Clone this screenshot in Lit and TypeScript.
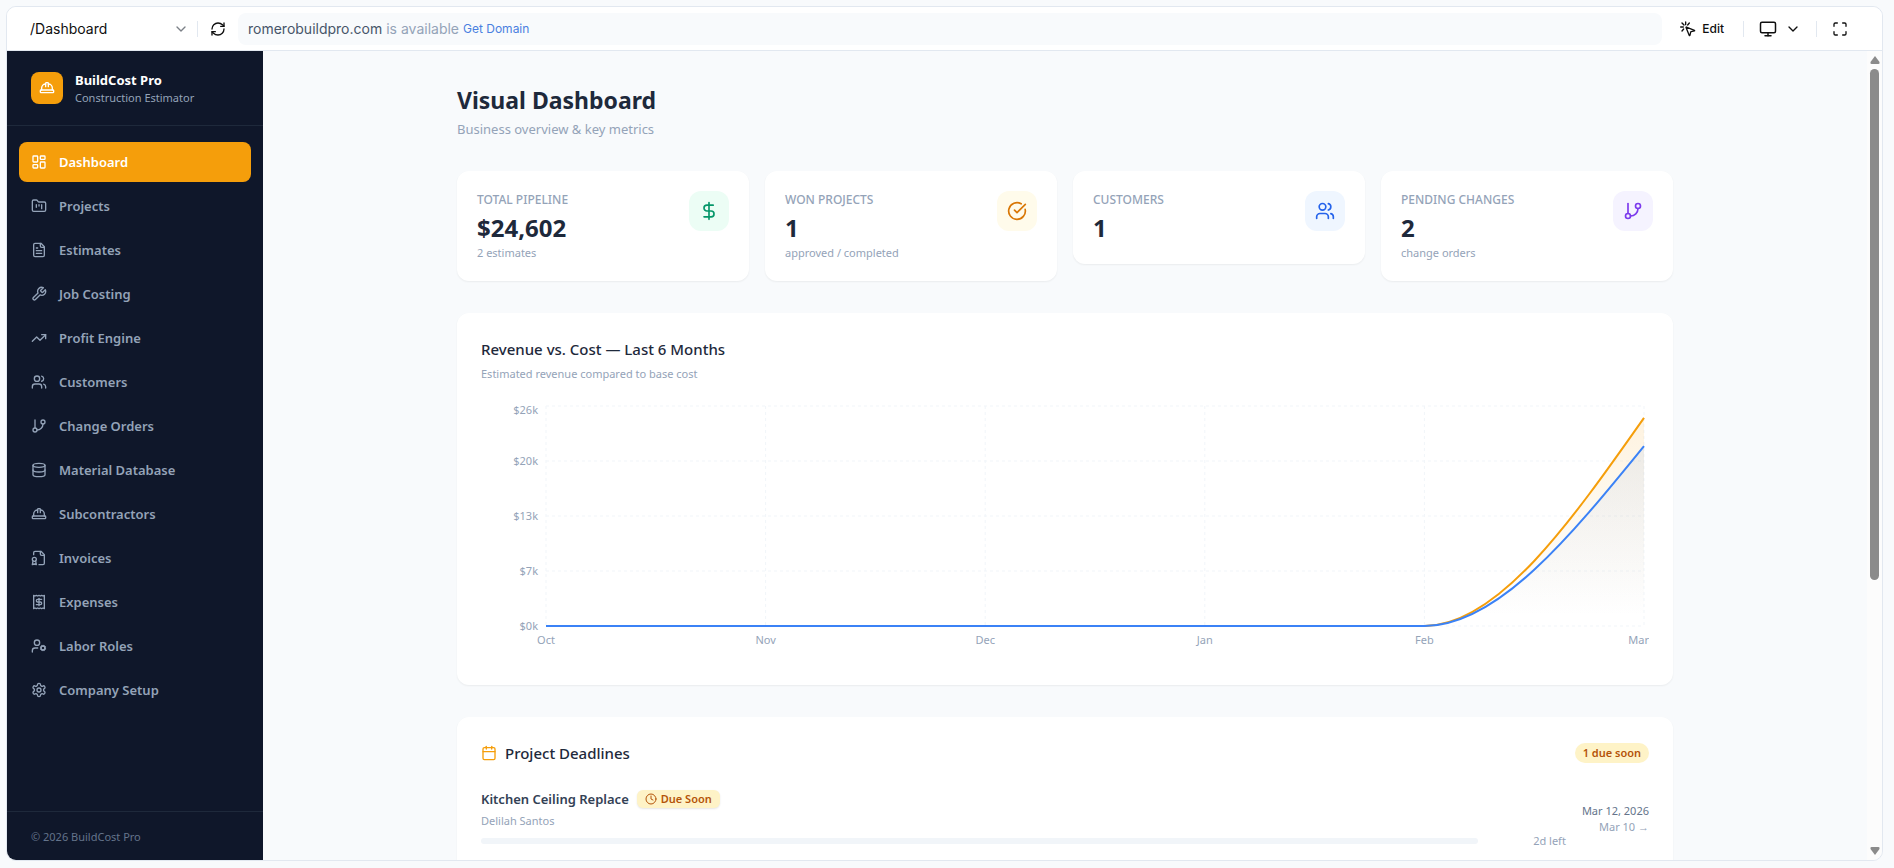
import { LitElement, html, css, svg } from 'lit';
import { customElement, property, state } from 'lit/decorators.js';
import { classMap } from 'lit/directives/class-map.js';

const ICONS: Record<string, any> = {
	dashboard: svg`<rect x="3" y="3" width="7" height="9" rx="1"/><rect x="14" y="3" width="7" height="5" rx="1"/><rect x="14" y="12" width="7" height="9" rx="1"/><rect x="3" y="16" width="7" height="5" rx="1"/>`,
	folder: svg`<path d="M4 20h16a2 2 0 0 0 2-2V8a2 2 0 0 0-2-2h-7.93a2 2 0 0 1-1.66-.9l-.82-1.2A2 2 0 0 0 7.93 3H4a2 2 0 0 0-2 2v13c0 1.1.9 2 2 2Z"/><path d="M8 10v4"/><path d="M12 10v2"/><path d="M16 10v6"/>`,
	file: svg`<path d="M15 2H6a2 2 0 0 0-2 2v16a2 2 0 0 0 2 2h12a2 2 0 0 0 2-2V7Z"/><path d="M14 2v4a2 2 0 0 0 2 2h4"/><path d="M10 9H8"/><path d="M16 13H8"/><path d="M16 17H8"/>`,
	wrench: svg`<path d="M14.7 6.3a1 1 0 0 0 0 1.4l1.6 1.6a1 1 0 0 0 1.4 0l3.77-3.77a6 6 0 0 1-7.94 7.94l-6.91 6.91a2.12 2.12 0 0 1-3-3l6.91-6.91a6 6 0 0 1 7.94-7.94l-3.76 3.76z"/>`,
	trending: svg`<path d="M22 7 13.5 15.5 8.5 10.5 2 17"/><path d="M16 7h6v6"/>`,
	users: svg`<path d="M16 21v-2a4 4 0 0 0-4-4H6a4 4 0 0 0-4 4v2"/><circle cx="9" cy="7" r="4"/><path d="M22 21v-2a4 4 0 0 0-3-3.87"/><path d="M16 3.13a4 4 0 0 1 0 7.75"/>`,
	branch: svg`<path d="M6 3v12"/><circle cx="18" cy="6" r="3"/><circle cx="6" cy="18" r="3"/><path d="M18 9a9 9 0 0 1-9 9"/>`,
	database: svg`<ellipse cx="12" cy="5" rx="9" ry="3"/><path d="M3 5V19A9 3 0 0 0 21 19V5"/><path d="M3 12A9 3 0 0 0 21 12"/>`,
	hardhat: svg`<path d="M10 10V5a1 1 0 0 1 1-1h2a1 1 0 0 1 1 1v5"/><path d="M14 6a6 6 0 0 1 6 6v3"/><path d="M4 15v-3a6 6 0 0 1 6-6"/><rect x="2" y="15" width="20" height="4" rx="1"/>`,
	badge: svg`<path d="M12 22h6a2 2 0 0 0 2-2V7l-5-5H6a2 2 0 0 0-2 2v3"/><path d="M14 2v4a2 2 0 0 0 2 2h4"/><circle cx="5" cy="14" r="3"/><path d="M7 16.5 8 22l-3-1-3 1 1-5.5"/>`,
	receipt: svg`<path d="M4 2v20l2-1 2 1 2-1 2 1 2-1 2 1 2-1 2 1V2l-2 1-2-1-2 1-2-1-2 1-2-1-2 1Z"/><path d="M16 8h-6a2 2 0 1 0 0 4h4a2 2 0 1 1 0 4H8"/><path d="M12 17.5v-11"/>`,
	usercog: svg`<circle cx="18" cy="15" r="3"/><circle cx="9" cy="7" r="4"/><path d="M10 15H6a4 4 0 0 0-4 4v2"/><path d="m21.7 16.4-.9-.3"/><path d="m15.2 13.9-.9-.3"/><path d="m16.6 18.7.3-.9"/><path d="m19.1 12.2.3-.9"/><path d="m19.6 18.7-.4-1"/><path d="m16.8 12.3-.4-1"/><path d="m14.3 16.6 1-.4"/><path d="m20.7 13.8 1-.4"/>`,
	settings: svg`<path d="M12.22 2h-.44a2 2 0 0 0-2 2v.18a2 2 0 0 1-1 1.73l-.43.25a2 2 0 0 1-2 0l-.15-.08a2 2 0 0 0-2.73.73l-.22.38a2 2 0 0 0 .73 2.73l.15.1a2 2 0 0 1 1 1.72v.51a2 2 0 0 1-1 1.74l-.15.09a2 2 0 0 0-.73 2.73l.22.38a2 2 0 0 0 2.73.73l.15-.08a2 2 0 0 1 2 0l.43.25a2 2 0 0 1 1 1.73V20a2 2 0 0 0 2 2h.44a2 2 0 0 0 2-2v-.18a2 2 0 0 1 1-1.73l.43-.25a2 2 0 0 1 2 0l.15.08a2 2 0 0 0 2.73-.73l.22-.39a2 2 0 0 0-.73-2.73l-.15-.08a2 2 0 0 1-1-1.74v-.5a2 2 0 0 1 1-1.74l.15-.09a2 2 0 0 0 .73-2.73l-.22-.38a2 2 0 0 0-2.73-.73l-.15.08a2 2 0 0 1-2 0l-.43-.25a2 2 0 0 1-1-1.73V4a2 2 0 0 0-2-2z"/><circle cx="12" cy="12" r="3"/>`,
	dollar: svg`<path d="M12 2v20"/><path d="M17 5H9.5a3.5 3.5 0 0 0 0 7h5a3.5 3.5 0 0 1 0 7H6"/>`,
	check: svg`<path d="M21.801 10A10 10 0 1 1 17 3.335"/><path d="m9 11 3 3L22 4"/>`,
	calendar: svg`<path d="M8 2v4"/><path d="M16 2v4"/><rect x="3" y="4" width="18" height="18" rx="2"/><path d="M3 10h18"/>`,
	clock: svg`<circle cx="12" cy="12" r="10"/><path d="M12 6v6l4 2"/>`,
	refresh: svg`<path d="M3 12a9 9 0 0 1 9-9 9.75 9.75 0 0 1 6.74 2.74L21 8"/><path d="M21 3v5h-5"/><path d="M21 12a9 9 0 0 1-9 9 9.75 9.75 0 0 1-6.74-2.74L3 16"/><path d="M8 16H3v5"/>`,
	chevron: svg`<path d="m6 9 6 6 6-6"/>`,
	monitor: svg`<rect x="2" y="3" width="20" height="14" rx="2"/><path d="M8 21h8"/><path d="M12 17v4"/>`,
	expand: svg`<path d="M8 3H5a2 2 0 0 0-2 2v3"/><path d="M21 8V5a2 2 0 0 0-2-2h-3"/><path d="M3 16v3a2 2 0 0 0 2 2h3"/><path d="M16 21h3a2 2 0 0 0 2-2v-3"/>`,
	click: svg`<path d="M9.04 9.69a.5.5 0 0 1 .65-.65l12 4.9a.5.5 0 0 1-.07.95l-4.85 1.14a1 1 0 0 0-.74.74l-1.14 4.85a.5.5 0 0 1-.95.07z"/><path d="M8.5 1.5v4"/><path d="m14 3-2.5 3"/><path d="m3 3 3 3"/><path d="M1 9h4"/><path d="m5.5 12-2.5 3"/>`,
};

function icon(name: string, size = 16) {
	return html`<svg width=${size} height=${size} viewBox="0 0 24 24" fill="none" stroke="currentColor" stroke-width="2" stroke-linecap="round" stroke-linejoin="round" aria-hidden="true">${ICONS[name]}</svg>`;
}

@customElement('revenue-chart')
export class RevenueChart extends LitElement {

	@property({ type: Array })
	months = ['Oct', 'Nov', 'Dec', 'Jan', 'Feb', 'Mar'];

	@property({ type: Array })
	revenue = [0, 0, 0, 0, 0, 24602];

	@property({ type: Array })
	cost = [0, 0, 0, 0, 0, 21270];

	@state()
	width = 1168;

	private max = 26000;
	private left = 65;
	private top = 5;
	private plotHeight = 220;
	private observer?: ResizeObserver;

	static get styles() {
		return css`
			:host {
				display: block;
				height: 260px;
				overflow: hidden;
			}

			svg {
				display: block;
			}

			text {
				font-family: "Noto Sans", sans-serif;
				font-size: 11px;
				fill: #94a3b8;
			}

			.grid line {
				stroke: #f1f5f9;
				stroke-dasharray: 3 3;
			}

			.line {
				fill: none;
				stroke-width: 2;
			}

			.revenue {
				stroke: #f59e0b;
			}

			.cost {
				stroke: #3b82f6;
			}
		`;
	}

	firstUpdated() {
		this.observer = new ResizeObserver(() => {
			this.width = this.clientWidth;
		});
		this.observer.observe(this);
	}

	disconnectedCallback() {
		super.disconnectedCallback();
		this.observer?.disconnect();
	}

	x(i: number) {
		return this.left + (this.width - this.left - 5) * i / (this.months.length - 1);
	}

	y(value: number) {
		return this.top + this.plotHeight * (1 - value / this.max);
	}

	// flat up to the last month, then eases upward
	curve(values: number[]) {
		let d = `M${this.x(0)},${this.y(values[0])}`;
		for (let i = 1; i < values.length; i++) {
			const x0 = this.x(i - 1), x1 = this.x(i);
			const y0 = this.y(values[i - 1]), y1 = this.y(values[i]);
			const third = (x1 - x0) / 3;
			d += `C${x0 + third},${y0} ${x1 - third},${y1 + (y0 - y1) / 2} ${x1},${y1}`;
		}
		return d;
	}

	area(values: number[]) {
		return `${this.curve(values)}V${this.y(0)}H${this.x(0)}Z`;
	}

	render() {
		const ticks = [0, 6500, 13000, 19500, 26000];
		const last = this.months.length - 1;
		const right = this.x(last);
		return html`
			<svg width=${this.width} height="260" role="img" aria-label="Revenue and cost by month">
				<defs>
					<linearGradient id="fill-revenue" x1="0" y1="0" x2="0" y2="1">
						<stop offset="5%" stop-color="#f59e0b" stop-opacity=".12"/>
						<stop offset="95%" stop-color="#f59e0b" stop-opacity="0"/>
					</linearGradient>
					<linearGradient id="fill-cost" x1="0" y1="0" x2="0" y2="1">
						<stop offset="5%" stop-color="#3b82f6" stop-opacity=".08"/>
						<stop offset="95%" stop-color="#3b82f6" stop-opacity="0"/>
					</linearGradient>
				</defs>
				<g class="grid">
					${ticks.map(t => svg`<line x1=${this.left} x2=${right} y1=${this.y(t)} y2=${this.y(t)}/>`)}
					${this.months.map((_, i) => svg`<line x1=${this.x(i)} x2=${this.x(i)} y1=${this.top} y2=${this.y(0)}/>`)}
				</g>
				<path d=${this.area(this.revenue)} fill="url(#fill-revenue)"/>
				<path class="line revenue" d=${this.curve(this.revenue)}/>
				<path d=${this.area(this.cost)} fill="url(#fill-cost)"/>
				<path class="line cost" d=${this.curve(this.cost)}/>
				${ticks.map(t => svg`<text x=${this.left - 8} y=${Math.max(this.y(t), 9) + 4} text-anchor="end">$${Math.round(t / 1000)}k</text>`)}
				${this.months.map((m, i) => svg`<text x=${i === last ? this.width : this.x(i)} y="243" text-anchor=${i === last ? 'end' : 'middle'}>${m}</text>`)}
			</svg>
		`;
	}
}

@customElement('stat-card')
export class StatCard extends LitElement {

	@property()
	label = '';

	@property()
	value = '';

	@property()
	note = '';

	@property()
	icon = '';

	@property()
	tone = '';

	static get styles() {
		return css`
			.card {
				display: flex;
				justify-content: space-between;
				align-items: flex-start;
				padding: 20px;
				background: white;
				border-radius: 12px;
				box-shadow: 0 1px 2px rgba(0, 0, 0, .06);
			}

			.label {
				font-size: 12px;
				line-height: 18px;
				font-weight: 500;
				text-transform: uppercase;
				color: #94a3b8;
			}

			.value {
				margin-top: 3px;
				font-size: 24px;
				line-height: 32px;
				font-weight: 700;
				color: #1e293b;
			}

			.note {
				font-size: 11px;
				line-height: 17px;
				color: #94a3b8;
			}

			.icon {
				display: grid;
				place-items: center;
				width: 40px;
				height: 40px;
				border-radius: 12px;
			}

			.green {
				background: #ecfdf5;
				color: #059669;
			}

			.amber {
				background: #fffbeb;
				color: #d97706;
			}

			.blue {
				background: #eff6ff;
				color: #2563eb;
			}

			.purple {
				background: #f5f3ff;
				color: #7c3aed;
			}
		`;
	}

	render() {
		return html`
			<div class="card">
				<div>
					<div class="label">${this.label}</div>
					<div class="value">${this.value}</div>
					${this.note ? html`<div class="note">${this.note}</div>` : ''}
				</div>
				<div class="icon ${this.tone}">${icon(this.icon, 20)}</div>
			</div>
		`;
	}
}

@customElement('app-root')
export default class AppRoot extends LitElement {

	@state()
	page = 'Dashboard';

	nav = [
		['dashboard', 'Dashboard'],
		['folder', 'Projects'],
		['file', 'Estimates'],
		['wrench', 'Job Costing'],
		['trending', 'Profit Engine'],
		['users', 'Customers'],
		['branch', 'Change Orders'],
		['database', 'Material Database'],
		['hardhat', 'Subcontractors'],
		['badge', 'Invoices'],
		['receipt', 'Expenses'],
		['usercog', 'Labor Roles'],
		['settings', 'Company Setup'],
	];

	static get styles() {
		return css`
			:host {
				display: block;
				box-sizing: border-box;
				height: 100vh;
				padding: 6px 11px 7px 6px;
				background: #f8fafc;
				font-family: "Noto Sans", sans-serif;
				color: #1e293b;
			}

			* {
				box-sizing: border-box;
			}

			h1, h2, h3, p {
				margin: 0;
			}

			svg {
				flex: none;
			}

			button, select {
				border: 0;
				padding: 0;
				background: none;
				font: inherit;
				color: inherit;
				cursor: pointer;
			}

			a {
				text-decoration: none;
			}

			.frame {
				display: flex;
				flex-direction: column;
				height: 100%;
				border: 1px solid #e2e8f0;
				border-radius: 10px;
				overflow: hidden;
			}

			.toolbar {
				flex: none;
				display: flex;
				align-items: center;
				height: 44px;
				padding: 0 34px 0 23px;
				background: white;
				border-bottom: 1px solid #e2e8f0;
				font-family: Inter, sans-serif;
				font-size: 12px;
				color: #0f0f0f;
			}

			.route {
				display: flex;
				align-items: center;
				width: 159px;
				margin-right: 8px;
				color: #7b8087;
			}

			.route select {
				flex: 1;
				appearance: none;
				font-size: 14px;
				color: #0f0f0f;
			}

			.separator {
				width: 1px;
				height: 16px;
				background: #e2e8f0;
			}

			.toolbar button {
				display: flex;
				align-items: center;
				gap: 8px;
			}

			.reload {
				margin: 0 12px;
			}

			.address {
				flex: 1;
				display: flex;
				align-items: center;
				gap: 4px;
				height: 32px;
				padding: 0 10px;
				border-radius: 8px;
				background: #f8fafc;
				font-size: 14px;
				color: #94a3b8;
			}

			.host {
				color: #475569;
			}

			.address a {
				font-size: 12px;
				color: #4a7fe0;
			}

			.tools {
				display: flex;
				align-items: center;
				gap: 15px;
				padding-left: 18px;
			}

			.toolbar .edit {
				gap: 6px;
				padding-right: 4px;
				font-weight: 500;
			}

			.body {
				flex: 1;
				display: flex;
				min-height: 0;
			}

			.sidebar {
				flex: none;
				display: flex;
				flex-direction: column;
				width: 256px;
				background: #0f172a;
				color: #94a3b8;
			}

			.brand {
				display: flex;
				align-items: center;
				gap: 12px;
				padding: 19px 24px;
				border-bottom: 1px solid #1e293b;
			}

			.logo {
				display: grid;
				place-items: center;
				width: 32px;
				height: 32px;
				border-radius: 8px;
				background: #f59e0b;
				color: white;
			}

			.name {
				font-size: 13px;
				line-height: 20px;
				font-weight: 700;
				color: white;
			}

			.tagline {
				font-size: 11px;
				line-height: 16px;
			}

			nav {
				flex: 1;
				display: flex;
				flex-direction: column;
				gap: 4px;
				padding: 16px 12px;
			}

			.item {
				display: flex;
				align-items: center;
				gap: 12px;
				height: 40px;
				padding: 0 12px;
				border-radius: 8px;
				font-size: 13px;
				font-weight: 600;
				color: #94a3b8;
			}

			.item.active {
				background: #f59e0b;
				color: white;
			}

			.copyright {
				padding: 17px 24px 15px;
				border-top: 1px solid #1e293b;
				font-size: 11px;
				line-height: 16px;
				color: #64748b;
			}

			main {
				flex: 1;
				min-width: 0;
				overflow-y: auto;
				scrollbar-width: none;
			}

			.content {
				display: flex;
				flex-direction: column;
				gap: 32px;
				max-width: 1280px;
				margin: 0 auto;
				padding: 32px;
			}

			h1 {
				font-size: 23px;
				line-height: 34px;
				font-weight: 700;
			}

			.lead {
				margin-top: 2px;
				font-size: 13px;
				line-height: 20px;
				color: #94a3b8;
			}

			.stats {
				display: grid;
				grid-template-columns: repeat(4, 1fr);
				align-items: start;
				gap: 16px;
			}

			.panel {
				padding: 24px;
				background: white;
				border-radius: 12px;
				box-shadow: 0 1px 2px rgba(0, 0, 0, .06);
			}

			h2 {
				font-size: 15px;
				line-height: 24px;
				font-weight: 500;
			}

			.hint {
				margin: 5px 0 19px;
				font-size: 11px;
				line-height: 16px;
				color: #94a3b8;
			}

			.heading {
				display: flex;
				align-items: center;
				gap: 8px;
				color: #f59e0b;
			}

			.heading h2 {
				flex: 1;
				color: #1e293b;
			}

			.pill {
				padding: 0 8px;
				border-radius: 10px;
				background: #fef3c7;
				font-size: 11px;
				line-height: 20px;
				font-weight: 600;
				color: #b45309;
			}

			.deadline {
				display: flex;
				align-items: center;
				gap: 16px;
				padding-top: 24px;
			}

			.job {
				flex: 1;
				font-size: 11px;
				line-height: 16px;
				color: #94a3b8;
			}

			.title {
				display: flex;
				align-items: center;
				gap: 8px;
				margin-bottom: 4px;
			}

			h3 {
				font-size: 13px;
				line-height: 20px;
				font-weight: 600;
				color: #334155;
			}

			.due {
				display: flex;
				align-items: center;
				gap: 4px;
				padding: 0 8px;
				border-radius: 6px;
				background: #fef3c7;
				box-shadow: 0 1px 2px rgba(0, 0, 0, .1);
				font-size: 11px;
				line-height: 18px;
				font-weight: 600;
				color: #b45309;
			}

			.progress {
				display: flex;
				align-items: center;
				gap: 8px;
				margin-top: 4px;
			}

			.track {
				flex: 1;
				height: 6px;
				border-radius: 3px;
				background: #f1f5f9;
			}

			.left {
				width: 80px;
				text-align: right;
			}

			.dates {
				text-align: right;
				font-size: 11px;
				line-height: 16px;
				color: #94a3b8;
			}

			.end {
				color: #64748b;
			}

			.arrow {
				font-family: "Liberation Sans", sans-serif;
			}

			.scrollbar {
				flex: none;
				display: flex;
				flex-direction: column;
				align-items: center;
				width: 15px;
				padding: 5px 0;
				background: #fcfcfc;
				color: #8b8b8b;
			}

			.thumb {
				width: 9px;
				height: 64%;
				margin: 5px 0 auto;
				border-radius: 5px;
				background: #8b8b8b;
			}
		`;
	}

	render() {
		return html`
			<div class="frame">
				<header class="toolbar">
					<div class="route">
						<select aria-label="Page">
							<option>/Dashboard</option>
						</select>
						${icon('chevron')}
					</div>
					<span class="separator"></span>
					<button class="reload" aria-label="Reload">${icon('refresh')}</button>
					<div class="address">
						<span class="host">romerobuildpro.com</span>
						<span>is available</span>
						<a href="#">Get Domain</a>
					</div>
					<div class="tools">
						<button class="edit">${icon('click')} Edit</button>
						<span class="separator"></span>
						<button aria-label="Device">${icon('monitor', 18)}${icon('chevron')}</button>
						<span class="separator"></span>
						<button aria-label="Full screen">${icon('expand')}</button>
					</div>
				</header>
				<div class="body">
					<aside class="sidebar">
						<div class="brand">
							<div class="logo">${icon('hardhat')}</div>
							<div>
								<div class="name">BuildCost Pro</div>
								<div class="tagline">Construction Estimator</div>
							</div>
						</div>
						<nav>
							${this.nav.map(([glyph, name]) => html`
								<a href="#" class=${classMap({ item: true, active: name === this.page })} @click=${() => this.page = name}>
									${icon(glyph)}${name}
								</a>
							`)}
						</nav>
						<div class="copyright">© 2026 BuildCost Pro</div>
					</aside>
					<main>
						<div class="content">
							<div>
								<h1>Visual Dashboard</h1>
								<p class="lead">Business overview &amp; key metrics</p>
							</div>
							<div class="stats">
								<stat-card label="Total Pipeline" value="$24,602" note="2 estimates" icon="dollar" tone="green"></stat-card>
								<stat-card label="Won Projects" value="1" note="approved / completed" icon="check" tone="amber"></stat-card>
								<stat-card label="Customers" value="1" icon="users" tone="blue"></stat-card>
								<stat-card label="Pending Changes" value="2" note="change orders" icon="branch" tone="purple"></stat-card>
							</div>
							<section class="panel">
								<h2>Revenue vs. Cost — Last 6 Months</h2>
								<p class="hint">Estimated revenue compared to base cost</p>
								<revenue-chart></revenue-chart>
							</section>
							<section class="panel">
								<div class="heading">
									${icon('calendar')}
									<h2>Project Deadlines</h2>
									<span class="pill">1 due soon</span>
								</div>
								<div class="deadline">
									<div class="job">
										<div class="title">
											<h3>Kitchen Ceiling Replace</h3>
											<span class="due">${icon('clock', 12)}Due Soon</span>
										</div>
										<div>Delilah Santos</div>
										<div class="progress">
											<div class="track"></div>
											<span class="left">2d left</span>
										</div>
									</div>
									<div class="dates">
										<div class="end">Mar 12, 2026</div>
										<div>Mar 10 <span class="arrow">→</span></div>
									</div>
								</div>
							</section>
						</div>
					</main>
					<div class="scrollbar" aria-hidden="true">
						<svg width="10" height="8" viewBox="0 0 10 8" fill="currentColor"><path d="M5 0 9.5 6Q10 8 8.5 8H1.5Q0 8 .5 6Z"/></svg>
						<div class="thumb"></div>
						<svg width="10" height="8" viewBox="0 0 10 8" fill="currentColor"><path d="M5 8 .5 2Q0 0 1.5 0H8.5Q10 0 9.5 2Z"/></svg>
					</div>
				</div>
			</div>
		`;
	}
}
